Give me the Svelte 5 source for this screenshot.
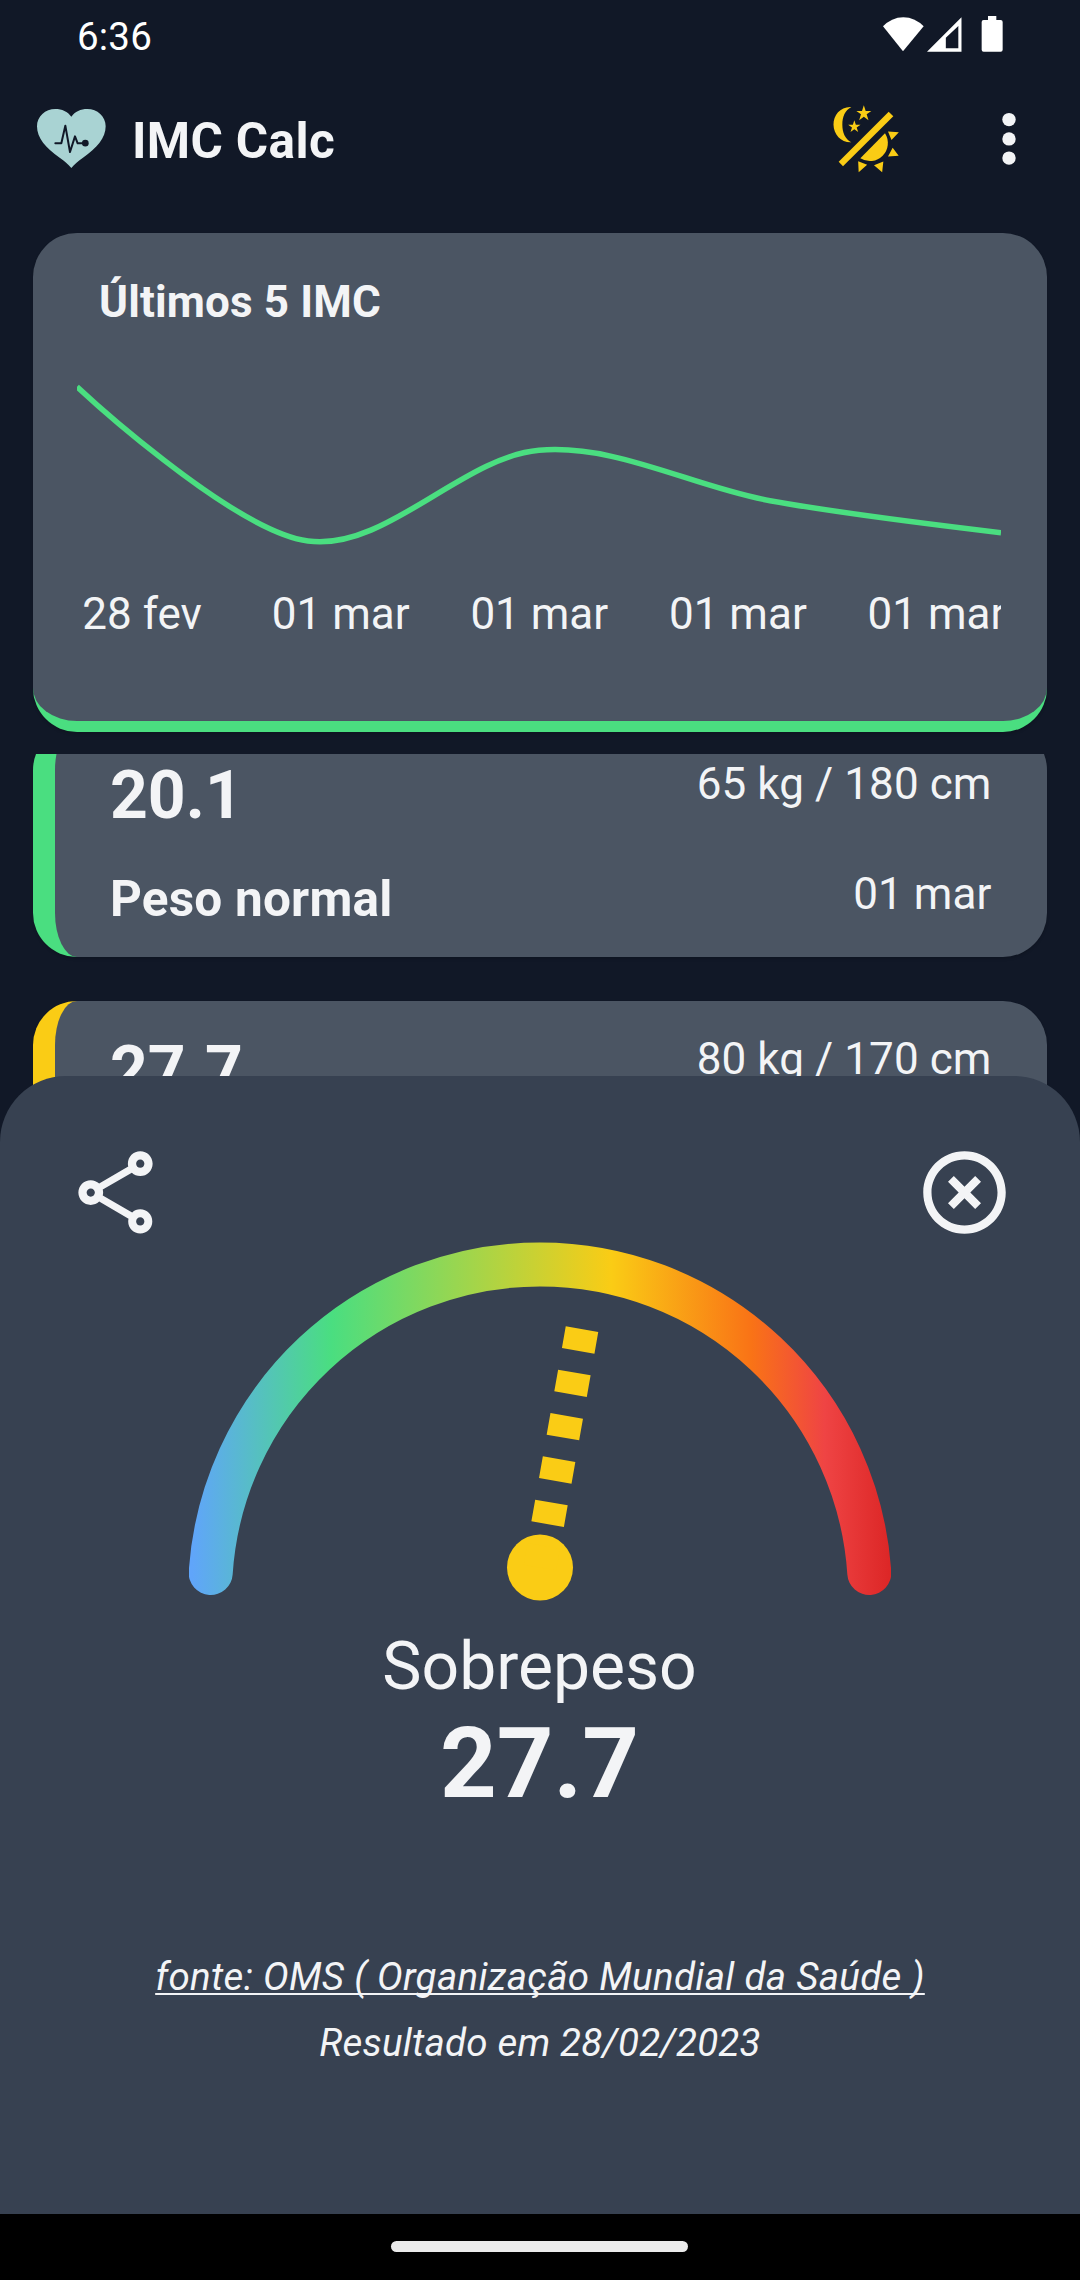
<script>
  const labels = ['28 fev', '01 mar', '01 mar', '01 mar', '01 mar'];
  const values = [386.7, 541, 450.3, 500.7, 532.7];
  const step = 231;
  const chartTop = 335;

  // Cardinal spline through evenly spaced points
  function spline(ys) {
    const pts = ys.map((y, i) => [i * step, y - chartTop]);
    const at = (i) => pts[Math.max(0, Math.min(pts.length - 1, i))];
    let d = `M${pts[0][0]} ${pts[0][1]}`;
    for (let i = 0; i < pts.length - 1; i++) {
      const [a, b, c, e] = [at(i - 1), at(i), at(i + 1), at(i + 2)];
      const first = i === 0;
      const last = i === pts.length - 2;
      const c1 = first ? b : [b[0] + (c[0] - a[0]) / 6, b[1] + (c[1] - a[1]) / 6];
      const c2 = last ? c : [c[0] - (e[0] - b[0]) / 6, c[1] - (e[1] - b[1]) / 6];
      d += ` C${c1.join(' ')} ${c2.join(' ')} ${c.join(' ')}`;
    }
    return d;
  }

  const line = spline(values);

  const items = [
    { imc: '20.1', status: 'Peso normal', size: '65 kg / 180 cm', date: '01 mar', tone: 'green' },
    { imc: '27.7', status: 'Sobrepeso', size: '80 kg / 170 cm', date: '28 fev', tone: 'yellow' }
  ];
</script>

<div class="screen">
  <div class="status">
    <span class="time">6:36</span>
    <svg class="status-icons" viewBox="310 48 359 108" fill="#fff">
      <path d="M370 154 310 79A82 82 0 0 1 432 79Z" />
      <path fill-rule="evenodd" d="M442 155 545.5 52V155ZM498.500 144.500H536V78L498.500 113Z" />
      <path d="M625 48h25v12h13q6 0 6 6v83q0 6-6 6h-51q-6 0-6-6V66q0-6 6-6h13z" />
    </svg>
  </div>

  <header>
    <svg class="logo" viewBox="112 326 206 177">
      <path fill="#a9d3d3" d="M215 503C205 491 195 482 180 472C138 443 112 413 112 378C112 348 137 326 167 326C187 326 204 334 215 349C226 334 243 326 263 326C293 326 318 348 318 378C318 413 292 443 250 472C235 482 225 491 215 503Z" />
      <path fill="none" stroke="#111827" stroke-width="6" stroke-linecap="round" stroke-linejoin="round" d="M167 429H185L197 376 211 455 226 408 234 429H254" />
      <circle cx="257" cy="428.500" r="10" fill="#111827" />
    </svg>
    <h1>IMC Calc</h1>
    <svg class="theme" viewBox="155 312 205 208" fill="#facc15">
      <path d="M213 321C181 319 159 345 159.500 374C160 404 183 428 213 426.500C194 417 186 397 186 374C186 350 194 331 213 321Z" />
      <path d="M250.500 316 256 333H273L259 343 264.500 360.500 250.500 350 236.500 360.500 242 343 228 333H245Z" />
      <path d="M222 360.500 226.500 374H240.500L229 382.500 233.500 396 222 387.500 210.500 396 215 382.500 203.500 374H217.500Z" />
      <path d="M325 335.500 339 349 188 499 175 485.500Z" />
      <path d="M314 400A54 54 0 0 1 240 475Z" />
      <path d="M323 394.500 355.500 397 333.500 420ZM337 443 355 467 323 469.500ZM233.500 484 260.500 494.500 235 516.500ZM309 484.500 305.500 516.500 281 496Z" />
    </svg>
    <svg class="dots" viewBox="0 0 14 54" fill="#f3f4f6">
      <circle cx="7" cy="7.600" r="6.700" />
      <circle cx="7" cy="26.900" r="6.700" />
      <circle cx="7" cy="46.100" r="6.700" />
    </svg>
  </header>

  <section class="chart-card">
    <h2>Últimos 5 IMC</h2>
    <svg class="chart" viewBox="0 0 924 230">
      <path d={line} fill="none" stroke="#4ade80" stroke-width="5.500" />
    </svg>
    <div class="axis">
      <div class="axis-track">
        {#each labels as label}
          <span>{label}</span>
        {/each}
      </div>
    </div>
  </section>

  <main class="list">
    <div class="scroller">
      {#each items as item}
        <article class={item.tone}>
          <strong class="imc">{item.imc}</strong>
          <span class="meta">{item.size}</span>
          <strong class="label">{item.status}</strong>
          <span class="meta">{item.date}</span>
        </article>
      {/each}
    </div>
  </main>

  <div class="sheet">
    <div class="actions">
      <svg viewBox="0 0 24 24" fill="#f3f4f6">
        <path d="M18 16.08C17.24 16.08 16.56 16.38 16.04 16.85L8.91 12.7C8.96 12.47 9 12.24 9 12S8.96 11.53 8.91 11.3L15.96 7.19C16.5 7.69 17.21 8 18 8C19.66 8 21 6.66 21 5S19.66 2 18 2 15 3.34 15 5C15 5.24 15.04 5.47 15.09 5.7L8.04 9.81C7.5 9.31 6.79 9 6 9C4.34 9 3 10.34 3 12S4.34 15 6 15C6.79 15 7.5 14.69 8.04 14.19L15.16 18.34C15.11 18.55 15.08 18.77 15.08 19C15.08 20.61 16.39 21.91 18 21.91S20.92 20.61 20.92 19C20.92 17.39 19.61 16.08 18 16.08M18 4C18.55 4 19 4.45 19 5S18.55 6 18 6 17 5.55 17 5 17.45 4 18 4M6 13C5.45 13 5 12.55 5 12S5.45 11 6 11 7 11.45 7 12 6.55 13 6 13M18 20C17.45 20 17 19.55 17 19S17.45 18 18 18 19 18.45 19 19 18.55 20 18 20Z" />
      </svg>
      <svg viewBox="0 0 24 24" fill="#f3f4f6">
        <path d="M12 20C7.590 20 4 16.410 4 12S7.590 4 12 4 20 7.590 20 12 16.410 20 12 20M12 2C6.470 2 2 6.470 2 12S6.470 22 12 22 22 17.530 22 12 17.530 2 12 2M14.590 8 12 10.590 9.410 8 8 9.410 10.590 12 8 14.590 9.410 16 12 13.410 14.590 16 16 14.590 13.410 12 16 9.410Z" />
      </svg>
    </div>

    <svg class="gauge" viewBox="189 1242 702 360">
      <defs>
        <linearGradient id="scale" gradientUnits="userSpaceOnUse" x1="192" y1="0" x2="891" y2="0">
          <stop offset="0" stop-color="#60a5fa" />
          <stop offset="0.200" stop-color="#4ade80" />
          <stop offset="0.600" stop-color="#facc15" />
          <stop offset="0.800" stop-color="#f97316" />
          <stop offset="0.905" stop-color="#ef4444" />
          <stop offset="1" stop-color="#dc2626" />
        </linearGradient>
      </defs>
      <path d="M210.700 1573A330 330 0 0 1 869.300 1573" fill="none" stroke="url(#scale)" stroke-width="44" stroke-linecap="round" />
      <circle cx="540" cy="1567.500" r="33" fill="#facc15" />
      <path d="M540 1567.500 582 1329.200" fill="none" stroke="#facc15" stroke-width="33" stroke-dasharray="22" />
    </svg>

    <p class="result">Sobrepeso</p>
    <p class="value">27.7</p>
    <p class="source">fonte: OMS ( Organização Mundial da Saúde )</p>
    <p class="date">Resultado em 28/02/2023</p>
  </div>

  <div class="nav"><div class="pill"></div></div>
</div>

<style>
  :global(body) {
    margin: 0;
    background: #111827;
  }

  .screen {
    position: relative;
    box-sizing: border-box;
    display: flex;
    flex-direction: column;
    width: 1080px;
    height: 2280px;
    overflow: hidden;
    background: #111827;
    color: #f3f4f6;
    font-family: Roboto, sans-serif;
  }

  h1, h2, p {
    margin: 0;
  }

  svg {
    display: block;
    flex: none;
  }

  .status {
    display: flex;
    justify-content: space-between;
    align-items: flex-start;
    height: 66px;
    padding: 0 77px;
    color: #fff;
    font-size: 38.5px;
    line-height: 66px;
  }

  .time {
    padding-top: 4px;
    letter-spacing: 0.2px;
  }

  .status-icons {
    width: 119.67px;
    height: 36px;
    margin-top: 16px;
  }

  header {
    display: flex;
    align-items: center;
    height: 145px;
    padding: 0 64.5px 0 37.3px;
  }

  .logo {
    width: 68.67px;
    height: 59px;
  }

  h1 {
    flex: 1;
    margin-left: 26px;
    padding-top: 5px;
    font-size: 49.5px;
    line-height: 77px;
    font-weight: 700;
    letter-spacing: 0.35px;
  }

  .theme {
    width: 68.33px;
    height: 69.33px;
    margin-right: 101.5px;
  }

  .dots {
    width: 14px;
    height: 54px;
  }

  .chart-card {
    box-sizing: border-box;
    height: 499px;
    margin: 22px 33px 0;
    padding-top: 36px;
    background: #4b5563;
    border-bottom: 11px solid #4ade80;
    border-radius: 44px;
    box-shadow: 0 2px 3px rgba(0, 0, 0, 0.15);
  }

  h2 {
    padding-left: 66px;
    font-size: 44px;
    line-height: 66px;
    font-weight: 700;
    letter-spacing: 0.15px;
  }

  .chart {
    width: 924px;
    height: 230px;
    margin-left: 44px;
    overflow: hidden;
  }

  .axis {
    width: 924px;
    margin: 16px 0 0 44px;
    overflow: hidden;
  }

  .axis-track {
    display: grid;
    grid-template-columns: repeat(5, 198.6px);
    margin-left: -34.2px;
    font-size: 44px;
    line-height: 66px;
    text-align: center;
    white-space: nowrap;
  }

  .list {
    height: 400px;
    margin-top: 22px;
    overflow: hidden;
  }

  .scroller {
    display: flex;
    flex-direction: column;
    gap: 44px;
    margin-top: -28px;
    padding: 0 33px;
  }

  article {
    box-sizing: border-box;
    display: grid;
    grid-template-columns: 1fr auto;
    grid-template-rows: 88px 77px;
    row-gap: 22px;
    flex: none;
    height: 231px;
    padding: 25px 55.5px 0 55px;
    background: #4b5563;
    border-left: 22px solid;
    border-radius: 44px;
    box-shadow: 0 2px 3px rgba(0, 0, 0, 0.15);
  }

  .green {
    border-left-color: #4ade80;
  }

  .yellow {
    border-left-color: #facc15;
  }

  .imc {
    padding-top: 1px;
    font-size: 66px;
    line-height: 88px;
  }

  .label {
    font-size: 49.5px;
    line-height: 77px;
    letter-spacing: 0.2px;
  }

  .meta {
    font-size: 44px;
    line-height: 66px;
    letter-spacing: 0.08px;
    text-align: right;
  }

  .sheet {
    position: absolute;
    left: 0;
    right: 0;
    bottom: 66px;
    box-sizing: border-box;
    height: 1138px;
    padding-top: 67px;
    background: #374151;
    border-radius: 66px 66px 0 0;
    text-align: center;
  }

  .actions {
    display: flex;
    justify-content: space-between;
    padding: 0 66px;
  }

  .actions svg {
    width: 99px;
    height: 99px;
  }

  .gauge {
    width: 702px;
    height: 360px;
    margin: 0 auto;
  }

  .result {
    margin-top: 21px;
    padding-right: 1px;
    font-size: 66px;
    line-height: 88px;
  }

  .value {
    margin-top: -3px;
    padding-right: 1px;
    font-size: 99px;
    line-height: 110px;
    font-weight: 700;
  }

  .source,
  .date {
    font-size: 38.5px;
    line-height: 66px;
    font-style: italic;
  }

  .source {
    margin-top: 126px;
    letter-spacing: 0.31px;
    text-decoration: underline;
    text-decoration-thickness: 2px;
    text-underline-offset: 3px;
    text-decoration-skip-ink: none;
  }

  .date {
    letter-spacing: 0.2px;
  }

  .nav {
    display: flex;
    justify-content: center;
    height: 66px;
    margin-top: auto;
    background: #000;
  }

  .pill {
    width: 297px;
    height: 11px;
    margin: 27px 1px 0 0;
    border-radius: 6px;
    background: #ebebeb;
  }
</style>
